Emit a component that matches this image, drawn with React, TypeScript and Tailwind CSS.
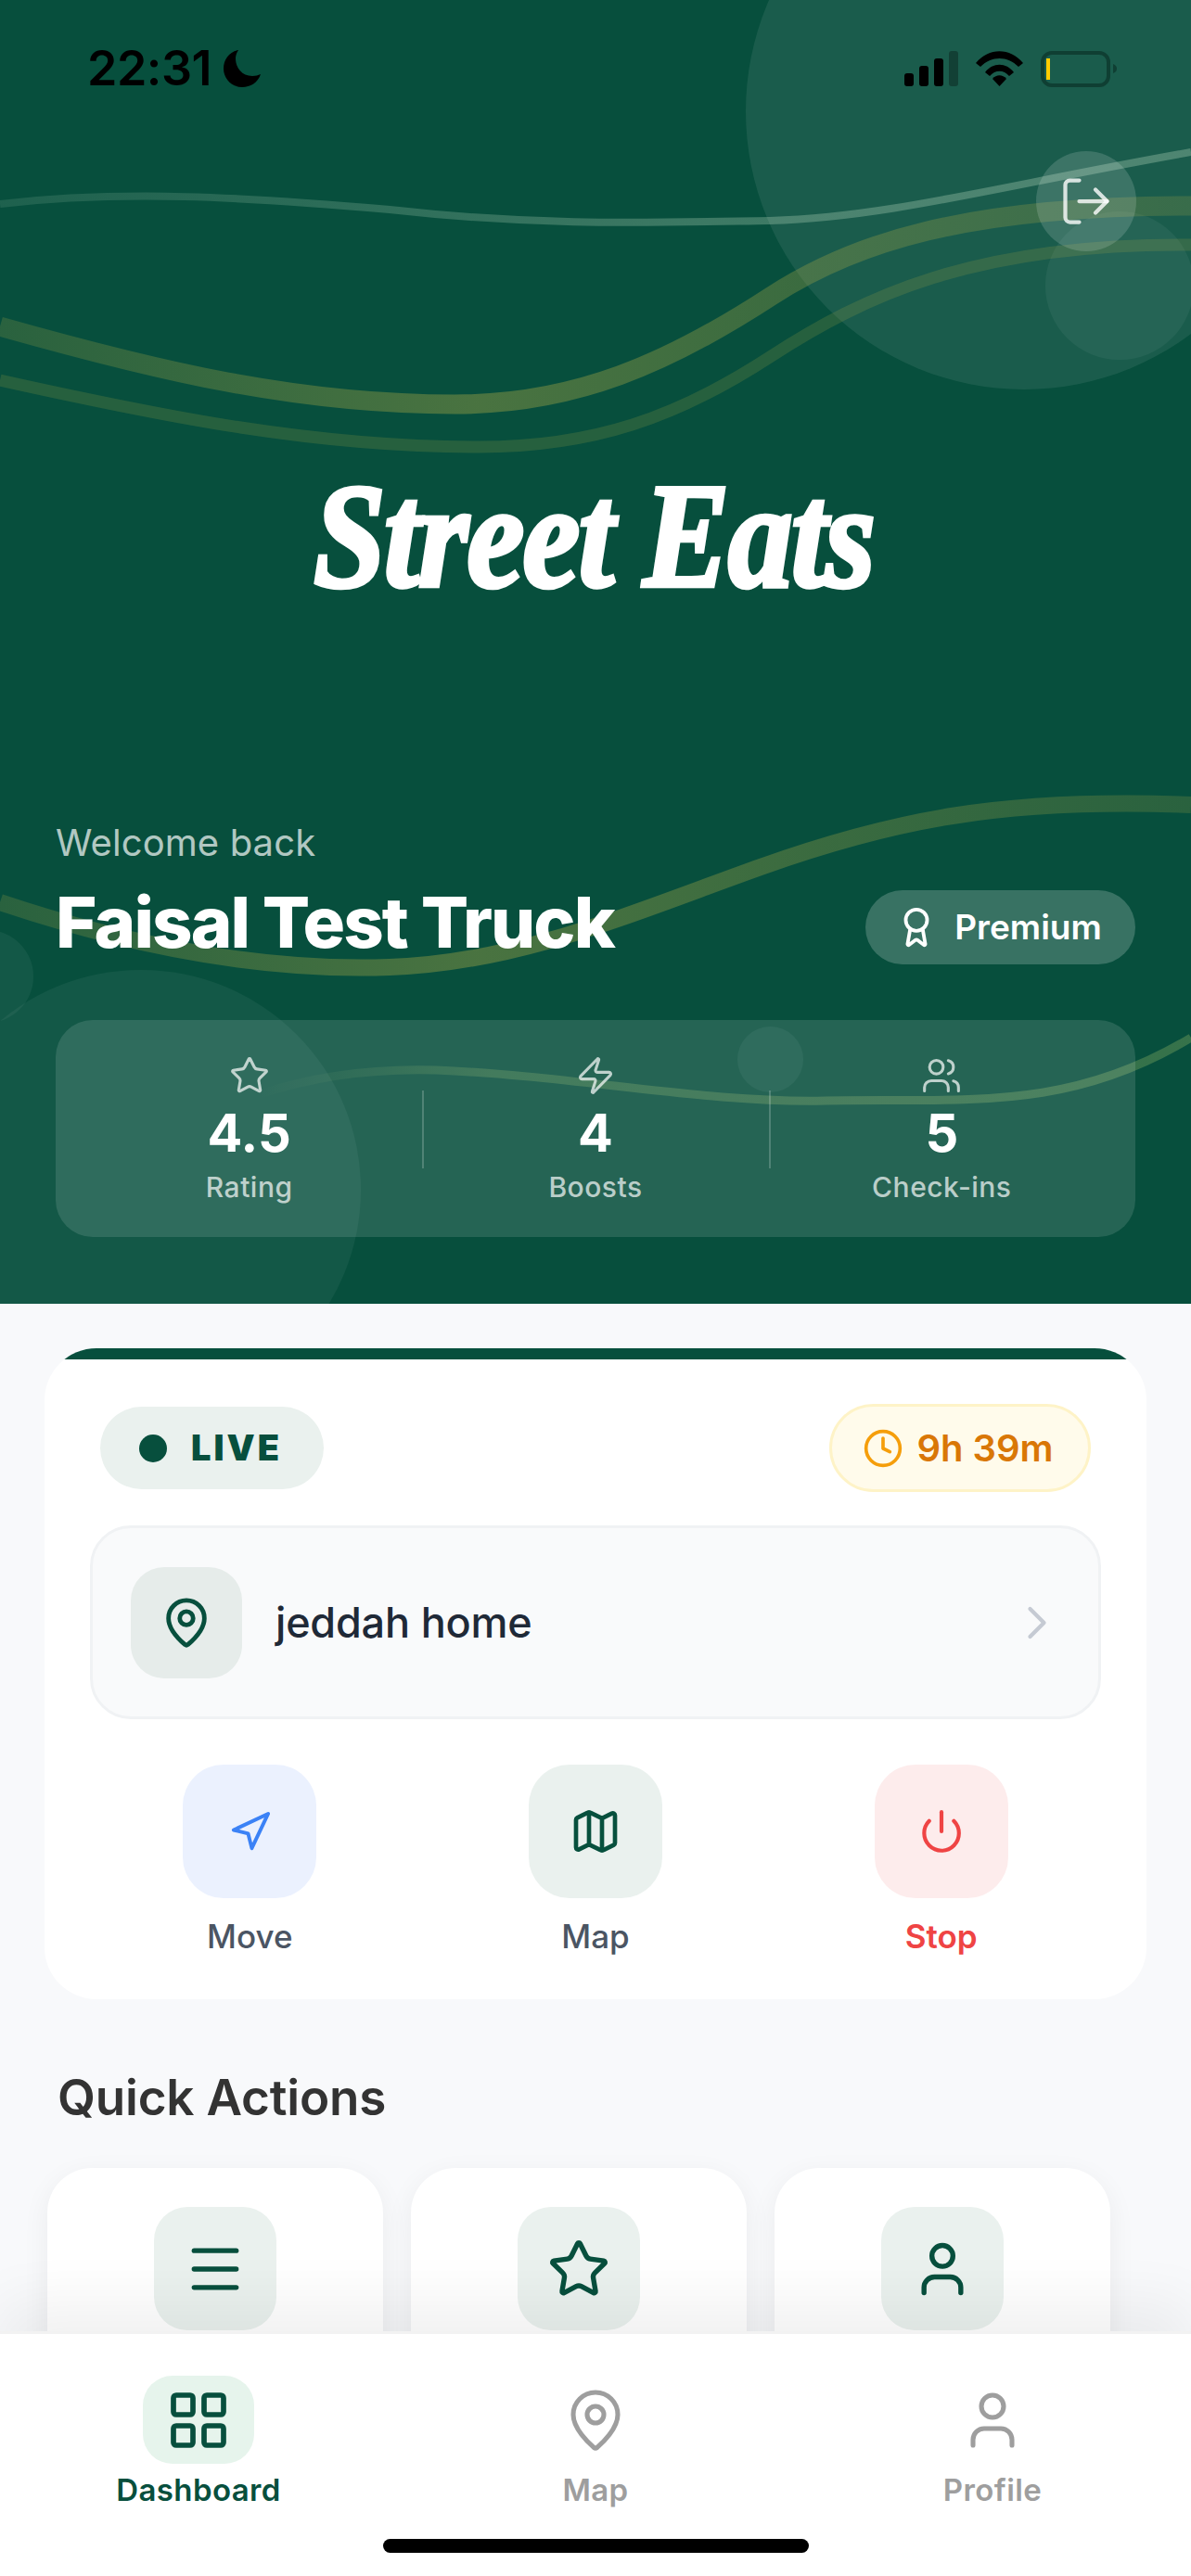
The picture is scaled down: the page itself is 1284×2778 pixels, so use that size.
import React from 'react';
import { Award, ChevronRight, Clock, LayoutGrid, LogOut, Map as MapIcon, MapPin, Menu, Navigation, Power, Star, User, Users, Zap } from 'lucide-react';

const stats = [
  { icon: Star, value: '4.5', label: 'Rating' },
  { icon: Zap, value: '4', label: 'Boosts' },
  { icon: Users, value: '5', label: 'Check-ins' }
];

const controls = [
  { icon: Navigation, size: 47, label: 'Move', box: 'bg-[#ebf1fe]', iconColor: 'text-[#3b82f6]', text: 'text-[#4b5563] font-medium' },
  { icon: MapIcon, size: 56, label: 'Map', box: 'bg-[#eaf1ee]', iconColor: 'text-[#07503d]', text: 'text-[#4b5563] font-medium' },
  { icon: Power, size: 50, label: 'Stop', box: 'bg-[#fdecec]', iconColor: 'text-[#ef4444]', text: 'text-[#ef4444] font-semibold' }
];

const quickActions = [Menu, Star, User];

const tabs = [
  { icon: LayoutGrid, label: 'Dashboard', active: true },
  { icon: MapPin, label: 'Map', active: false },
  { icon: User, label: 'Profile', active: false }
];

// Flowing ribbons behind the hero content
const HeroWaves = () => (
  <svg className="absolute inset-0 h-full w-full" viewBox="0 0 1284 1406" fill="none">
    <defs>
      <linearGradient id="ribbon" x1="0" y1="0" x2="1284" y2="0" gradientUnits="userSpaceOnUse">
        <stop offset="0" stopColor="#a5a545" stopOpacity="0.22" />
        <stop offset="0.4" stopColor="#a5a545" stopOpacity="0.42" />
        <stop offset="1" stopColor="#a5a545" stopOpacity="0.22" />
      </linearGradient>
      <linearGradient id="thread" x1="0" y1="0" x2="1284" y2="0" gradientUnits="userSpaceOnUse">
        <stop offset="0" stopColor="#c8e6c9" stopOpacity="0.12" />
        <stop offset="0.6" stopColor="#c8e6c9" stopOpacity="0.28" />
        <stop offset="1" stopColor="#c8e6c9" stopOpacity="0.3" />
      </linearGradient>
      <linearGradient id="lowThread" x1="280" y1="0" x2="1284" y2="0" gradientUnits="userSpaceOnUse">
        <stop offset="0" stopColor="#a5c56a" stopOpacity="0" />
        <stop offset="0.25" stopColor="#a5c56a" stopOpacity="0.22" />
        <stop offset="1" stopColor="#a5c56a" stopOpacity="0.3" />
      </linearGradient>
    </defs>
    <path d="M0 220C130 205 260 212 420 226C580 244 700 240 830 238C960 234 1080 200 1284 164" stroke="url(#thread)" strokeWidth="8" />
    <path d="M0 352C170 400 320 436 490 436C620 436 720 392 832 319C920 262 1040 222 1284 222" stroke="url(#ribbon)" strokeWidth="21" />
    <path d="M0 410C180 450 340 482 516 482C640 482 730 450 830 385C930 320 1050 262 1284 264" stroke="#a5a545" strokeOpacity="0.2" strokeWidth="13" />
    <path d="M0 973C140 1020 280 1048 420 1043C560 1038 680 985 820 935C960 885 1080 860 1284 868" stroke="url(#ribbon)" strokeWidth="18" />
    <path d="M280 1180C340 1160 400 1152 470 1154C620 1160 760 1190 890 1187C1040 1184 1150 1200 1284 1119" stroke="url(#lowThread)" strokeWidth="9" />
  </svg>
);

const StatusBar = () => (
  <div className="flex items-center justify-between pl-[94px] pr-[80px] pt-[53px]">
    <div className="flex items-center gap-[12px]">
      <span className="text-[52px] leading-[40px] font-semibold tracking-[-0.5px] text-black">22:31</span>
      <svg width="42" height="42" viewBox="0 0 42 42" fill="black">
        <path d="M17 1C7 3 1 11 1 21c0 11 9 20 20 20 9 0 17-5 20-14-3 1-5 2-9 2C21 29 14 20 14 10c0-3 1-6 3-9z" />
      </svg>
    </div>
    <div className="flex items-center gap-[19px]">
      <svg width="58" height="38" viewBox="0 0 58 38" fill="black">
        <rect x="0" y="24" width="10" height="14" rx="3" />
        <rect x="16" y="16" width="10" height="22" rx="3" />
        <rect x="32" y="8" width="10" height="30" rx="3" />
        <rect x="48" y="0" width="10" height="38" rx="3" fillOpacity="0.3" />
      </svg>
      <svg width="51" height="38" viewBox="0 0 51 38" fill="black">
        <path d="M0 13C14 -4 37 -4 51 13L46 17C34 5 17 5 5 17z" />
        <path d="M10 23C18 12 33 12 41 23L36 27C30 20 21 20 15 27z" />
        <path d="M18 30C22 25 29 25 33 30L25.500 38z" />
      </svg>
      <svg width="82" height="39" viewBox="0 0 82 39" fill="none">
        <rect x="2" y="2" width="71" height="35" rx="10" stroke="#0f3f33" strokeWidth="4" />
        <rect x="6" y="8" width="4" height="23" fill="#ffcc00" />
        <path d="M78 14c3 1 4 3 4 5s-1 4-4 5z" fill="#0f3f33" />
      </svg>
    </div>
  </div>
);

const Hero = () => (
  <section className="relative h-[1406px] shrink-0 overflow-hidden bg-[#074f3d]">
    <div className="absolute left-[804px] top-[-180px] h-[600px] w-[600px] rounded-full bg-white/8" />
    <div className="absolute left-[1127px] top-[228px] h-[160px] w-[160px] rounded-full bg-white/5" />
    <div className="absolute left-[-85px] top-[1046px] h-[474px] w-[474px] rounded-full bg-white/5" />
    <div className="absolute left-[-64px] top-[1003px] h-[100px] w-[100px] rounded-full bg-white/5" />
    <div className="absolute left-[795px] top-[1107px] h-[71px] w-[71px] rounded-full bg-white/5" />
    <HeroWaves />

    <div className="relative flex h-full flex-col">
      <StatusBar />

      <div className="flex justify-end px-[59px] pt-[68px]">
        <button className="flex h-[108px] w-[108px] items-center justify-center rounded-full bg-white/15 text-white/80">
          <LogOut size={60} strokeWidth={1.7} />
        </button>
      </div>

      <h1 className="pt-[222px] pr-[4px] text-center font-['Liberation_Serif',serif] text-[140px] leading-[170px] font-bold tracking-[-2px] text-white italic [-webkit-text-stroke:4px_white]">
        <span className="inline-block scale-y-115">Street Eats</span>
      </h1>

      <div className="flex items-start justify-between pl-[60px] pr-[60px] pt-[222px]">
        <div>
          <p className="text-[40px] leading-[48px] tracking-[0.1px] text-white/70">Welcome back</p>
          <h2 className="mt-[21px] text-[76px] leading-[80px] font-extrabold tracking-[-1.9px] text-white">Faisal Test Truck</h2>
        </div>
        <div className="mt-[75px] flex h-[80px] w-[291px] items-center justify-center gap-[18px] rounded-full bg-white/20 pr-[4px]">
          <Award size={46} strokeWidth={2} className="text-white" />
          <span className="text-[37px] font-semibold text-white">Premium</span>
        </div>
      </div>

      <div className="mx-[60px] mt-[60px] flex h-[234px] items-start rounded-[40px] bg-white/12 px-[22px] pt-[38px]">
        {stats.map((stat, index) => {
          const Icon = stat.icon;
          return (
            <div key={stat.label} className="relative flex flex-1 flex-col items-center">
              {index > 0 && <div className="absolute left-0 top-[38px] h-[84px] w-[2px] bg-white/20" />}
              <Icon size={44} strokeWidth={1.7} className="text-white/70" />
              <span className="mt-[9px] text-[56px] leading-[62px] font-bold text-white">{stat.value}</span>
              <span className="mt-[8px] text-[30px] leading-[38px] font-medium tracking-[0.5px] text-white/70">{stat.label}</span>
            </div>
          );
        })}
      </div>
    </div>
  </section>
);

const LiveCard = () => (
  <div className="mx-[48px] mt-[48px] h-[702px] overflow-hidden rounded-[56px] bg-white">
    <div className="h-[12px] bg-[#074f3d]" />
    <div className="flex items-center justify-between pl-[60px] pr-[60px] pt-[48px]">
      <div className="flex h-[89px] w-[241px] items-center gap-[26px] rounded-full bg-[#eaf1ee] pl-[42px]">
        <span className="h-[30px] w-[30px] rounded-full bg-[#074f3d]" />
        <span className="text-[38px] font-black tracking-[3px] text-[#074f3d]">LIVE</span>
      </div>
      <div className="flex h-[95px] w-[282px] items-center justify-center gap-[14px] rounded-full border-[3px] border-[#fef3c7] bg-[#fffbeb] pr-[4px]">
        <Clock size={44} strokeWidth={2} className="text-[#f59e0b]" />
        <span className="text-[40px] font-semibold text-[#d97706]">9h 39m</span>
      </div>
    </div>

    <div className="mx-[49px] mt-[36px] flex h-[209px] items-center rounded-[44px] border-[3px] border-[#f0f2f4] bg-[#f9fafb] pl-[41px] pr-[36px]">
      <div className="flex h-[120px] w-[120px] items-center justify-center rounded-[36px] bg-[#e6ecea]">
        <MapPin size={58} strokeWidth={2} className="text-[#074f3d]" />
      </div>
      <span className="ml-[36px] flex-1 text-[45px] font-medium tracking-[-0.2px] text-[#1f2937]">jeddah home</span>
      <ChevronRight size={60} strokeWidth={1.7} className="text-[#c5cad3]" />
    </div>

    <div className="mt-[49px] grid grid-cols-3 px-[35px]">
      {controls.map((control) => {
        const Icon = control.icon;
        return (
          <div key={control.label} className="flex flex-col items-center">
            <div className={`flex h-[144px] w-[144px] items-center justify-center rounded-[44px] ${control.box}`}>
              <Icon size={control.size} strokeWidth={2} className={control.iconColor} />
            </div>
            <span className={`mt-[19px] text-[35px] leading-[44px] ${control.text}`}>{control.label}</span>
          </div>
        );
      })}
    </div>
  </div>
);

const QuickActions = () => (
  <div className="pt-[75px]">
    <h3 className="px-[62px] text-[53px] leading-[62px] font-semibold tracking-[-0.2px] text-[#333333]">Quick Actions</h3>
    <div className="mt-[45px] flex gap-[30px] pl-[51px]">
      {quickActions.map((Icon, index) => (
        <div key={index} className="flex h-[260px] w-[362px] justify-center rounded-[48px] bg-white pt-[42px] shadow-[0_8px_30px_rgba(0,0,0,0.06)]">
          <div className="flex h-[133px] w-[132px] items-center justify-center rounded-[36px] bg-[#eaf1ee]">
            <Icon size={68} strokeWidth={1.9} className="text-[#074f3d]" />
          </div>
        </div>
      ))}
    </div>
  </div>
);

const TabBar = () => (
  <nav className="relative z-10 flex h-[264px] shrink-0 flex-col border-t-[3px] border-[#f2f2f2] bg-white shadow-[0_-30px_60px_rgba(0,0,0,0.06)]">
    <div className="grid grid-cols-3 pt-[45px]">
      {tabs.map((tab) => {
        const Icon = tab.icon;
        return (
          <div key={tab.label} className="flex flex-col items-center">
            <div className={`flex h-[95px] w-[120px] items-center justify-center rounded-[32px] ${tab.active ? 'bg-[#e6f4ec]' : ''}`}>
              <Icon size={72} strokeWidth={tab.active ? 1.9 : 1.7} className={tab.active ? 'text-[#074f3d]' : 'text-[#9e9e9e]'} />
            </div>
            <span className={`mt-[8px] text-[33px] leading-[40px] font-semibold tracking-[0.4px] ${tab.active ? 'text-[#074f3d]' : 'text-[#9e9e9e]'}`}>{tab.label}</span>
          </div>
        );
      })}
    </div>
    <div className="mx-auto mt-[33px] h-[15px] w-[459px] rounded-full bg-black" />
  </nav>
);

const App = () => {
  return (
    <div className="flex h-[2778px] w-[1284px] flex-col overflow-hidden bg-[#f8f9fb] font-['Inter',sans-serif]">
      <Hero />
      <main className="min-h-0 flex-1 overflow-hidden">
        <LiveCard />
        <QuickActions />
      </main>
      <TabBar />
    </div>
  );
};

export default App;
